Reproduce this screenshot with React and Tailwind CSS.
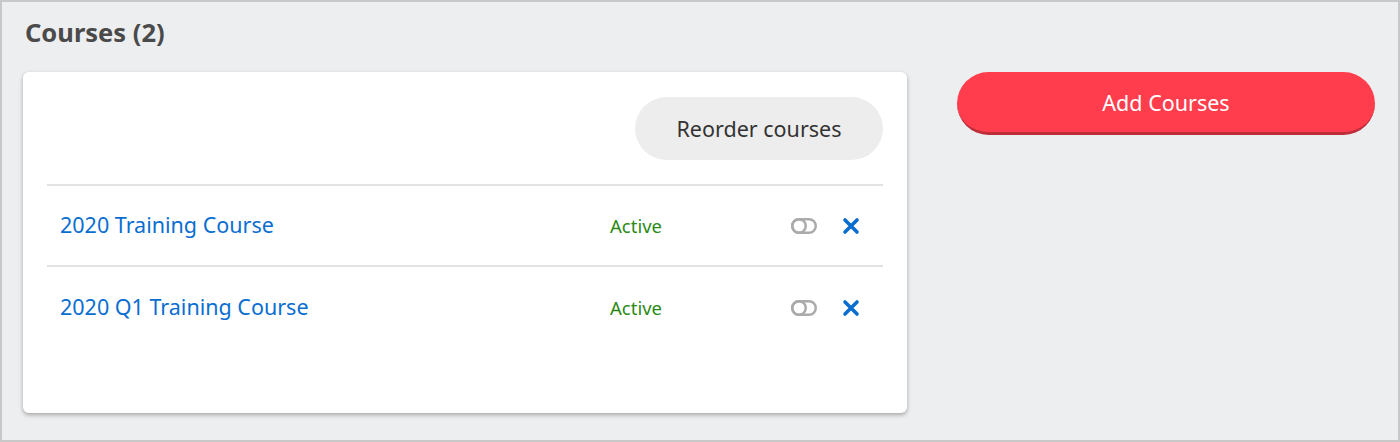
import React from 'react';

const courses = [
    { name: '2020 Training Course', status: 'Active' },
    { name: '2020 Q1 Training Course', status: 'Active' },
];

const ToggleIcon = () => (
    <svg width="26" height="16" viewBox="0 0 26 16" fill="none">
        <rect x="1.25" y="1.25" width="23.5" height="13.5" rx="6.75" stroke="#ababab" strokeWidth="2.5" />
        <circle cx="8" cy="8" r="6.75" stroke="#ababab" strokeWidth="2.5" />
    </svg>
);

const CloseIcon = () => (
    <svg width="18" height="18" viewBox="0 0 18 18" fill="none">
        <path d="M3 3L15 15M15 3L3 15" stroke="#0a6ed1" strokeWidth="3.6" strokeLinecap="round" />
    </svg>
);

const App = () => {
    return (
        <div
            className="w-[1400px] h-[442px] border-2 border-[#c8c8c8] bg-[#edeef0] pl-[21px] pr-[22px] pt-[14px]"
            style={{ fontFamily: '"Noto Sans", "Open Sans", sans-serif' }}
        >
            <h1 className="text-[25.5px] font-bold text-[#4a4a4a] leading-[32px] pl-[2px]">Courses (2)</h1>

            <div className="flex items-start gap-[50px] mt-[24px]">
                {/* Liste */}
                <div className="w-[884px] h-[341px] bg-white rounded-[6px] shadow-[0_2px_4px_rgba(0,0,0,0.3)] px-6 pt-[25px]">
                    <div className="flex justify-end">
                        <button className="w-[248px] h-[63px] pt-[2px] rounded-full bg-[#ededed] text-[21.5px] text-[#333333]">
                            Reorder courses
                        </button>
                    </div>
                    <div className="mt-[24px] border-t-2 border-[#e2e2e2]">
                        {courses.map((course, i) => (
                            <div
                                key={course.name}
                                className={`flex items-center h-[81px] pl-[13px] ${i === 0 ? 'border-b-2 border-[#e2e2e2]' : ''}`}
                            >
                                <span className="w-[550px] text-[21.5px] text-[#0a6ed1]">{course.name}</span>
                                <span className="w-[181px] text-[18.5px] text-[#2b8a15]">{course.status}</span>
                                <span className="w-[51px] flex"><ToggleIcon /></span>
                                <CloseIcon />
                            </div>
                        ))}
                    </div>
                </div>

                {/* Qo'shish tugmasi */}
                <button className="w-[418px] h-[63px] pt-[3px] rounded-full bg-[#ff3d4c] border-b-[3px] border-[#bd2d3a] text-white text-[21.5px]">
                    Add Courses
                </button>
            </div>
        </div>
    );
};

export default App;
